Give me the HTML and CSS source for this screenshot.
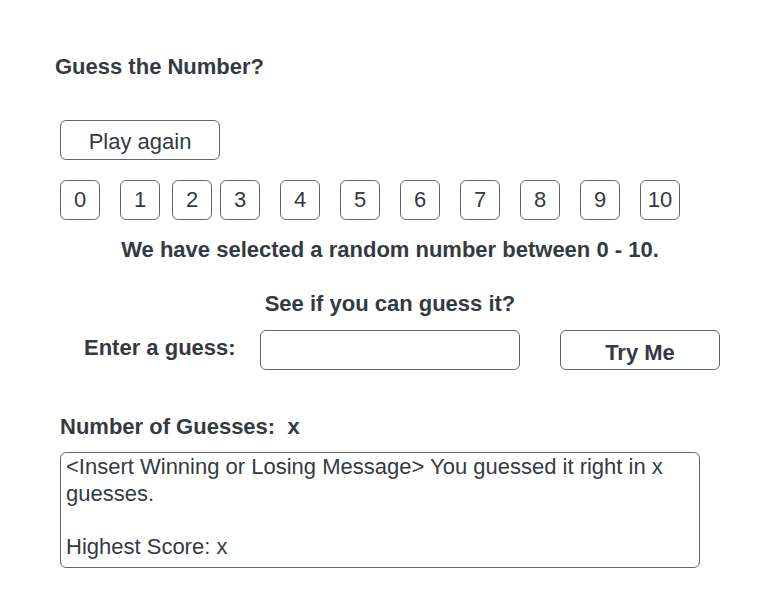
FILE: index.html
```html
<!DOCTYPE html>
<html lang="en">
<head>
<meta charset="utf-8">
<title>Guess the Number?</title>
<link rel="stylesheet" href="styles.css">
</head>
<body>
<main class="page">
  <h1 class="title">Guess the Number?</h1>
  <button class="btn play">Play again</button>
  <div class="numbers">
    <button class="num">0</button>
    <button class="num">1</button>
    <button class="num tight-a">2</button>
    <button class="num tight-b">3</button>
    <button class="num">4</button>
    <button class="num">5</button>
    <button class="num">6</button>
    <button class="num">7</button>
    <button class="num">8</button>
    <button class="num">9</button>
    <button class="num">10</button>
  </div>
  <p class="center intro">We have selected a random number between 0 - 10.</p>
  <p class="center ask">See if you can guess it?</p>
  <div class="guess-row">
    <label class="guess-label" for="guess">Enter a guess:</label>
    <input id="guess" class="guess-input" type="text">
    <button class="btn try">Try Me</button>
  </div>
  <p class="count">Number of Guesses:&nbsp; x</p>
  <div class="message">&lt;Insert Winning or Losing Message&gt; You guessed it right in x guesses.<br><br>Highest Score: x</div>
</main>
</body>
</html>
```

FILE: styles.css
```css
* { box-sizing: border-box; }
html, body {
  margin: 0;
  background: #ffffff;
}
body {
  font-family: "Liberation Sans", Arial, sans-serif;
  font-size: 22px;
  line-height: 26px;
  color: #343a42;
}
.page {
  width: 720px;
  padding: 54px 0 0 60px;
  display: flex;
  flex-direction: column;
  align-items: flex-start;
}
.title {
  margin: 0 0 0 -5px;
  font-size: 22px;
  line-height: 26px;
  font-weight: 700;
}
.btn, .num {
  font-family: inherit;
  font-size: 22px;
  color: inherit;
  background: #ffffff;
  border: 1px solid #62676e;
  border-radius: 6px;
  padding: 0;
}
.play {
  margin-top: 40px;
  width: 160px;
  height: 40px;
  padding-top: 3px;
}
.numbers {
  margin-top: 20px;
  display: flex;
  gap: 20px;
}
.num {
  width: 40px;
  height: 40px;
}
.numbers .tight-a { margin-left: -8px; }
.numbers .tight-b { margin-left: -12px; }
.center {
  margin: 0;
  width: 660px;
  text-align: center;
  font-weight: 700;
}
.intro { margin-top: 17px; }
.ask { margin-top: 28px; }
.guess-row {
  margin-top: 13px;
  display: flex;
  align-items: center;
}
.guess-label {
  margin-left: 24px;
  font-weight: 700;
  width: 152px;
  padding-bottom: 5px;
}
.guess-input {
  margin-left: 24px;
  width: 260px;
  height: 40px;
  border: 1px solid #62676e;
  border-radius: 6px;
  font-family: inherit;
  font-size: 22px;
}
.try {
  margin-left: 40px;
  width: 160px;
  height: 40px;
  font-weight: 700;
  padding-top: 6px;
}
.count {
  margin: 44px 0 0 0;
  font-weight: 700;
}
.message {
  margin-top: 12px;
  width: 640px;
  height: 116px;
  border: 1px solid #62676e;
  border-radius: 6px;
  padding: 1px 5px;
  line-height: 26.5px;
}
```
